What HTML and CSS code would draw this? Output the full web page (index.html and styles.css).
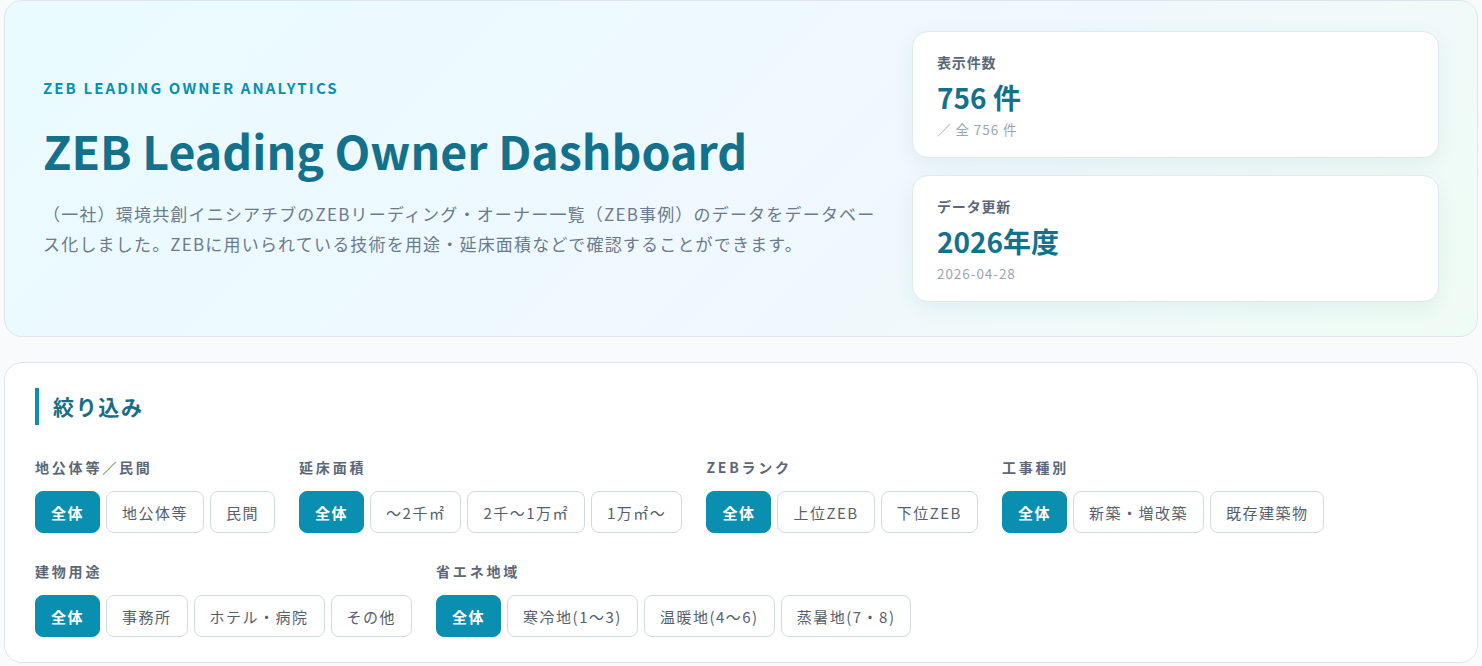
FILE: index.html
```html
<!DOCTYPE html>
<html lang="ja">
<head>
    <meta charset="utf-8">
    <meta name="viewport" content="width=device-width, initial-scale=1">
    <title>ZEB Leading Owner Dashboard</title>
    <link rel="stylesheet" href="styles.css">
</head>
<body>
    <div id="page">
        <header class="hero">
            <div class="hero-text">
                <p class="eyebrow">ZEB LEADING OWNER ANALYTICS</p>
                <h1>ZEB Leading Owner Dashboard</h1>
                <p class="lead">（一社）環境共創イニシアチブのZEBリーディング・オーナー一覧（ZEB事例）のデータをデータベース化しました。ZEBに用いられている技術を用途・延床面積などで確認することができます。</p>
            </div>
            <div class="stats">
                <div class="stat">
                    <div class="stat-label">表示件数</div>
                    <div class="stat-value">756 件</div>
                    <div class="stat-sub">／ 全 756 件</div>
                </div>
                <div class="stat">
                    <div class="stat-label">データ更新</div>
                    <div class="stat-value">2026年度</div>
                    <div class="stat-sub">2026-04-28</div>
                </div>
            </div>
        </header>

        <section class="panel">
            <h2>絞り込み</h2>
            <div class="filters">
                <div class="filter">
                    <div class="filter-label">地公体等／民間</div>
                    <div class="chips">
                        <button class="chip active">全体</button>
                        <button class="chip">地公体等</button>
                        <button class="chip">民間</button>
                    </div>
                </div>
                <div class="filter">
                    <div class="filter-label">延床面積</div>
                    <div class="chips">
                        <button class="chip active">全体</button>
                        <button class="chip">～2千㎡</button>
                        <button class="chip">2千～1万㎡</button>
                        <button class="chip">1万㎡～</button>
                    </div>
                </div>
                <div class="filter">
                    <div class="filter-label">ZEBランク</div>
                    <div class="chips">
                        <button class="chip active">全体</button>
                        <button class="chip">上位ZEB</button>
                        <button class="chip">下位ZEB</button>
                    </div>
                </div>
                <div class="filter">
                    <div class="filter-label">工事種別</div>
                    <div class="chips">
                        <button class="chip active">全体</button>
                        <button class="chip">新築・増改築</button>
                        <button class="chip">既存建築物</button>
                    </div>
                </div>
                <div class="filter">
                    <div class="filter-label">建物用途</div>
                    <div class="chips">
                        <button class="chip active">全体</button>
                        <button class="chip">事務所</button>
                        <button class="chip">ホテル・病院</button>
                        <button class="chip">その他</button>
                    </div>
                </div>
                <div class="filter">
                    <div class="filter-label">省エネ地域</div>
                    <div class="chips">
                        <button class="chip active">全体</button>
                        <button class="chip">寒冷地(1～3)</button>
                        <button class="chip">温暖地(4～6)</button>
                        <button class="chip">蒸暑地(7・8)</button>
                    </div>
                </div>
            </div>
        </section>
    </div>
</body>
</html>
```

FILE: styles.css
```css
:root {
    --teal: #0b8fb0;
    --teal-dark: #13718c;
    --border: #dfe5ec;
}

html {
    font-family: "Noto Sans CJK JP", "Noto Sans", sans-serif;
    color: #334155;
}

body {
    margin: 0;
    background: #f8fafc;
}

#page {
    padding: 0 4px;
}

/* --- Hero --- */
.hero {
    display: grid;
    grid-template-columns: minmax(0, 1fr) 527px;
    gap: 30px;
    align-items: center;
    padding: 30px 38px 34px;
    border: 1px solid var(--border);
    border-radius: 18px;
    background: linear-gradient(135deg, #e9fbfe 0%, #eff8fe 55%, #effcf4 100%);
}

.hero-text {
    padding-top: 3px;
}

.eyebrow {
    margin: 0;
    font-size: 15px;
    font-weight: 700;
    line-height: 20px;
    letter-spacing: 0.14em;
    color: var(--teal);
}

h1 {
    margin: 24px 0 22px;
    font-size: 46.5px;
    font-weight: 700;
    line-height: 55px;
    color: var(--teal-dark);
}

.lead {
    margin: 0;
    font-size: 17px;
    line-height: 30px;
    letter-spacing: 0.07em;
    color: #6b7a8c;
}

.stats {
    display: flex;
    flex-direction: column;
    gap: 17px;
}

.stat {
    padding: 20px 24px 19px;
    background: white;
    border: 1px solid #e3e9ef;
    border-radius: 16px;
    box-shadow: 0 6px 20px rgba(15, 80, 110, 0.07);
}

.stat-label {
    font-size: 14px;
    font-weight: 700;
    line-height: 20px;
    letter-spacing: 0.06em;
    color: #5b6778;
}

.stat-value {
    margin-top: 7px;
    font-size: 28px;
    font-weight: 700;
    line-height: 36px;
    color: var(--teal-dark);
}

.stat-sub {
    margin-top: 5px;
    font-size: 13.5px;
    line-height: 18px;
    letter-spacing: 0.07em;
    color: #9aa5b4;
}

/* --- Filters --- */
.panel {
    margin-top: 25px;
    padding: 25px 30px 25px;
    background: white;
    border: 1px solid var(--border);
    border-radius: 18px;
}

h2 {
    margin: 0 0 32px;
    padding-left: 14px;
    border-left: 4px solid var(--teal);
    font-size: 21px;
    font-weight: 700;
    line-height: 37px;
    letter-spacing: 0.08em;
    color: #196c85;
}

.filters {
    display: flex;
    flex-wrap: wrap;
    gap: 28px 24px;
}

.filter-label {
    margin-bottom: 14px;
    font-size: 14px;
    font-weight: 700;
    line-height: 20px;
    letter-spacing: 0.2em;
    color: #5b6778;
}

.chips {
    display: flex;
    gap: 6px;
}

.chip {
    height: 42px;
    padding: 0 15px;
    font-family: inherit;
    font-size: 15px;
    letter-spacing: 0.1em;
    color: #555f6d;
    background: white;
    border: 1px solid #d3d9e0;
    border-radius: 8px;
}

.chip.active {
    background: var(--teal);
    border-color: var(--teal);
    color: white;
    font-weight: 700;
}
```
